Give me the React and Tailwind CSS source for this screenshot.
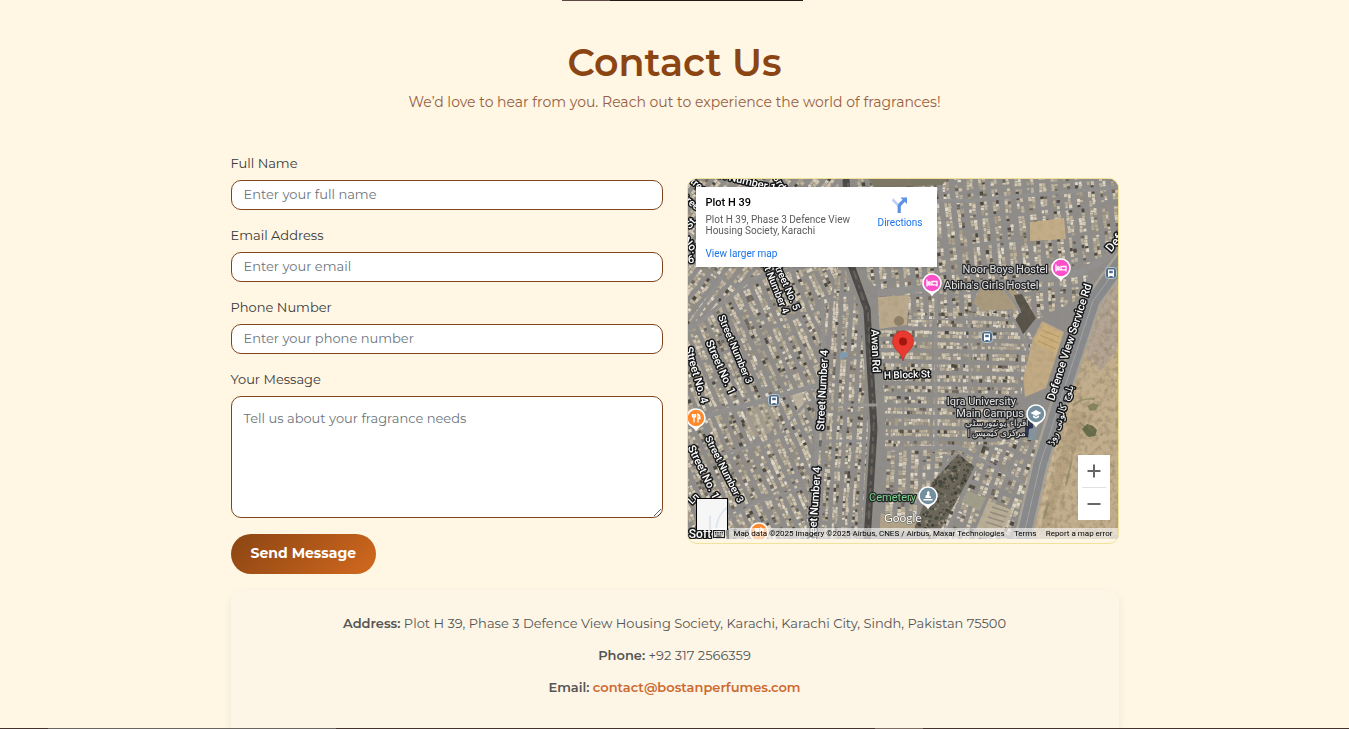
import React from "react";

/* ---------- aerial imagery ---------- */

const PALETTE = ["#d3c8b2", "#beb39c", "#aaa08b", "#e2dac9", "#6d665b", "#4c463e", "#968e7f"];
const WEIGHTS = [0.24, 0.25, 0.16, 0.12, 0.08, 0.06, 0.09];

function random(seed) {
  let s = seed;
  return () => {
    s = (s * 1664525 + 1013904223) % 4294967296;
    return s / 4294967296;
  };
}

function pick(r) {
  let sum = 0;
  for (let i = 0; i < WEIGHTS.length; i++) {
    sum += WEIGHTS[i];
    if (r < sum) return i;
  }
  return 0;
}

function houses({ seed, x, y, w, h, block, street, run, cross, rows }) {
  const rnd = random(seed);
  const paths = PALETTE.map(() => "");
  const long = rows ? w : h;
  const wide = rows ? h : w;
  for (let a = 0; a < wide; a += block + street) {
    const shift = rows ? 0 : rnd() * 4;
    for (let b = -shift; b < long; b += run + cross) {
      for (let half = 0; half < 2; half++) {
        let c = b;
        while (c < b + run) {
          const len = 1.6 + rnd() * 2.4;
          const depth = block / 2 - rnd() * 1.1;
          const off = a + (half * block) / 2 + rnd() * 0.7;
          if (rnd() > 0.1) {
            const i = pick(rnd());
            const px = (rows ? x + c : x + off).toFixed(1);
            const py = (rows ? y + off : y + c).toFixed(1);
            const pw = (rows ? len : depth).toFixed(1);
            const ph = (rows ? depth : len).toFixed(1);
            paths[i] += `M${px} ${py}h${pw}v${ph}h-${pw}z`;
          }
          c += len + rnd() * 0.6;
        }
      }
    }
  }
  return paths;
}

const QUARTERS = [
  { id: "nw", clip: "0,0 160,0 163,88 100,95 62,100 0,150", turn: "rotate(38 60 60)", seed: 7, x: -80, y: -80, w: 300, h: 300, block: 7, street: 4, run: 34, cross: 4 },
  { id: "w", clip: "60,100 100,88 150,86 134,150 128,220 122,290 118,360 0,360 0,152", turn: "rotate(-24 60 220)", seed: 21, x: -110, y: 20, w: 330, h: 410, block: 7, street: 4, run: 46, cross: 4 },
  { id: "mid", clip: "150,86 165,92 181,130 183,183 186,250 180,360 118,360 122,290 128,220 134,150", turn: "rotate(3 150 220)", seed: 33, x: 90, y: 70, w: 120, h: 300, block: 6, street: 4, run: 52, cross: 4 },
  { id: "ne", clip: "160,0 430,0 430,60 410,83 300,104 190,112 168,84", turn: "rotate(-6 300 60)", seed: 45, x: 140, y: -40, w: 320, h: 190, block: 7, street: 5, run: 23, cross: 4 },
  { id: "n2", clip: "190,118 250,108 330,104 400,96 392,120 350,140 190,140", turn: "rotate(-3 300 120)", seed: 51, x: 180, y: 90, w: 220, h: 60, block: 7, street: 5, run: 22, cross: 4 },
  { id: "mid-e", clip: "190,134 330,132 345,160 334,210 330,262 270,276 196,270", turn: "rotate(1 260 200)", seed: 64, x: 188, y: 130, w: 180, h: 144, block: 7, street: 4, run: 25, cross: 4, rows: true },
  { id: "s", clip: "192,270 270,268 240,310 226,344 190,332", turn: "rotate(2 220 300)", seed: 72, x: 186, y: 262, w: 90, h: 90, block: 8, street: 4, run: 28, cross: 4 },
  { id: "se", clip: "270,272 334,256 352,262 326,360 232,360 286,292", turn: "rotate(20 300 310)", seed: 88, x: 220, y: 230, w: 160, h: 160, block: 8, street: 4, run: 36, cross: 5 },
].map((q) => ({ ...q, paths: houses(q) }));

const SCRUB = (() => {
  const rnd = random(99);
  return Array.from({ length: 220 }, () => ({
    x: 335 + rnd() * 95,
    y: 100 + rnd() * 260,
    r: 0.5 + rnd() * 1.5,
    dark: rnd() > 0.5,
  }));
})();

const TREES = (() => {
  const rnd = random(13);
  return Array.from({ length: 420 }, () => ({
    x: 225 + rnd() * 62,
    y: 272 + rnd() * 82,
    r: 0.6 + rnd() * 1.3,
    tone: Math.floor(rnd() * 4),
  }));
})();

function Imagery() {
  return (
    <>
      <defs>
        <filter id="soft"><feGaussianBlur stdDeviation="0.35" /></filter>
        <filter id="grain" x="0" y="0" width="100%" height="100%">
          <feTurbulence type="fractalNoise" baseFrequency="0.18" numOctaves="4" seed="4" />
          <feColorMatrix values="0 0 0 0 0.28  0 0 0 0 0.22  0 0 0 0 0.14  2 0 0 0 -0.9" />
        </filter>
        {QUARTERS.map((q) => (
          <clipPath id={`q-${q.id}`} key={q.id}><polygon points={q.clip} /></clipPath>
        ))}
        <clipPath id="graves"><polygon points="270,275 287,288 253,350 226,350 244,304" /></clipPath>
        <clipPath id="desert"><polygon points="440,83 412,123 382,213 358,286 341,362 440,362" /></clipPath>
      </defs>
      <rect width="430" height="360" fill="#8f8d8b" />
      <g filter="url(#soft)">
        {QUARTERS.map((q) => (
          <g key={q.id} clipPath={`url(#q-${q.id})`}>
            <g transform={q.turn}>
              {q.paths.map((d, i) => <path key={i} d={d} fill={PALETTE[i]} />)}
            </g>
          </g>
        ))}
        <path d="M180 0h80l-6 6-66 3z" fill="#7c7765" />
        <path d="M342 43l34-4 2 21-36 2z" fill="#c3ad88" />
        <path d="M190 118l31-2-2 30-28 4z" fill="#baa98c" />
        <path d="M292 110l36 0 3 20-36 2-10-8z" fill="#a99a7e" />
        <path d="M326 116l8-1 14 24-14 18-8-14 6-10z" fill="#59534a" />
        <path d="M354 142l22 11-18 56-21 9-2-18 10-40z" fill="#c1aa84" />
        <path d="M356 146l18 9-6 20-22-12z" fill="#cbb07c" />
        <path d="M350 162l18 8M352 156l18 8M354 151l17 7" stroke="#b2986a" strokeWidth="1" />
        <path d="M58 232l20-8 10 12-6 18-22 6z" fill="#b5ac95" opacity=".5" />
        <path d="M104 216l10-5 3 22-5 4z" fill="#bdb5a3" />
        <circle cx="211" cy="142" r="5" fill="#8f7f66" />
        <path d="M152 174l8-1v5l-8 2z" fill="#7f9cb0" />
        <path d="M337 242l8 0 0 18-8-2z" fill="#25334f" />
        <path d="M341 250l8-2-1 13-8 0z" fill="#84939c" />
        <g clipPath="url(#graves)">
          <rect x="220" y="270" width="70" height="90" fill="#6b665a" />
          {TREES.map((t, i) => <circle key={i} cx={t.x} cy={t.y} r={t.r} fill={["#3f3e35", "#8f8878", "#545847", "#4a4840"][t.tone]} />)}
        </g>
        <path d="M280 312l18 7-6 12-19-8z" fill="#a09e8a" />
        <path d="M300 322l24 9-10 26-26-7z" fill="#b9ae97" />
        <path d="M304 328l16 5M302 333l16 5M300 338l16 5M298 343l16 5" stroke="#958d7e" strokeWidth="1.4" />
        <path d="M190 334l38 6-2 14-37-4z" fill="#b1a389" />
        <g clipPath="url(#desert)">
          <rect x="330" y="80" width="110" height="285" fill="#c2ae8c" />
          <path d="M432 96l-22 30-12 52 16 14 20-30z" fill="#b3a493" />
          <path d="M385 230l14 4-4 22-18 38-14 50-14 16 14-52z" fill="#ad9a78" opacity=".6" />
          {SCRUB.map((s, i) => <circle key={i} cx={s.x} cy={s.y} r={s.r} fill={s.dark ? "#9a8a68" : "#d2bf9b"} opacity=".55" />)}
          <path d="M398 140Q388 190 372 250T350 360" stroke="#cdbb9a" strokeWidth="3" fill="none" opacity=".7" />
          <path d="M386 226q6-7 20-6M392 244q10 8 16 12M384 280l-6 26M360 325l-4 14" stroke="#767a52" strokeWidth="2" fill="none" opacity=".5" strokeLinecap="round" />
          <path d="M394 250l5-5 6 2 4 4-2 6-6 1-3-2z" fill="#56603d" opacity=".85" />
          <path d="M399 227l6-3 6 2-3 5-6 1z" fill="#7a7b55" opacity=".85" />
          <rect x="330" y="80" width="110" height="285" filter="url(#grain)" opacity=".6" />
        </g>
        <g fill="none" stroke="#929190">
          <path d="M0 152L40 120 62 100 140 82M0 150q20-30 34-52" strokeWidth="4" />
          <path d="M0 248L22 236 84 219 130 206" strokeWidth="5" />
          <path d="M30 276L84 262 120 222M40 340L70 323 118 308" strokeWidth="3" />
          <path d="M134 226h54M134 262h50" strokeWidth="3" />
          <path d="M134 118L136 170 130 245 124 360" strokeWidth="4" />
          <path d="M160 0l8 88" strokeWidth="3" />
          <path d="M196 22L280 22 430 8" strokeWidth="4" />
          <path d="M190 114L250 108 320 104 392 94 420 78 440 58" strokeWidth="7" />
          <path d="M248 112v160M282 134v120M310 104q20 20 22 30M320 132q14 20 20 40" strokeWidth="3" />
          <path d="M194 270L270 268 336 304" strokeWidth="4" />
          <path d="M288 288L256 358" strokeWidth="3" />
        </g>
        <path d="M159 0L165 86 181 130 185 183 189 250 182 362" fill="none" stroke="#8f8d8a" strokeWidth="18" />
        <path d="M158 0L163 86 179 130 182 183 186 250 179 362" fill="none" stroke="#4b4946" strokeWidth="7" />
        <path d="M160 4L165 90 180 134 183 190 186 240 180 355" fill="none" stroke="#65625c" strokeWidth="2" strokeDasharray="9 6 4 3" />
        <path d="M172 226h18" stroke="#9a9895" strokeWidth="3" />
        <path d="M438 76L405 122 376 210 352 286 334 364" fill="none" stroke="#aaa498" strokeWidth="18" strokeLinejoin="round" />
        <path d="M438 76L405 122 376 210 352 286 334 364" fill="none" stroke="#888a8d" strokeWidth="13" strokeLinejoin="round" />
        <path d="M438 76L405 122 376 210 352 286 334 364" fill="none" stroke="#a5a5a2" strokeWidth="1" />
      </g>
      <rect width="430" height="360" filter="url(#grain)" opacity=".25" />
    </>
  );
}

/* ---------- labels and pins ---------- */

const STREETS = [
  ["Street Number 4", 134, 211, -87, 11],
  ["Street Number 4", 126, 328, -86, 11],
  ["Awan Rd", 188, 172, 88, 11],
  ["H Block St", 219, 195, -2, 10],
  ["Street Number 3", 48, 170, 67, 10],
  ["Street No. 1", 33, 188, 66, 11],
  ["Street No. 4", 9, 196, 74, 11],
  ["Street Number 3", 37, 290, 63, 10],
  ["Street No. 1", 16, 293, 64, 11],
  ["Street No. 5", 99, 106, 66, 10],
  ["Street Number 4", 85, 100, 68, 10],
  ["Street Number 13", 52, 0, 14, 11],
  ["3rd", 92, 3, 60, 10],
  ["Street", 10, 5, 40, 10],
  ["Street", 3, 22, 40, 10],
  ["St", 2, 44, -50, 11],
  ["No.", 3, 66, 50, 11],
  ["6", 3, 80, -10, 11],
  ["Ln", 5, 319, -45, 10],
  ["Defence View Service Rd", 381, 163, -72, 11],
  ["Def", 426, 64, -50, 12],
  ["بلوچ کالونی روڈ", 372, 236, -72, 10],
];

function Place({ x, y, color, children }) {
  return (
    <g transform={`translate(${x} ${y})`}>
      <path d="M0 13.5C-1.5 10.5-4 9-6.3 7.5A9.8 9.8 0 1 1 6.3 7.5C4 9 1.5 10.5 0 13.5Z" fill="#fff" />
      <circle r="8.2" fill={color} />
      {children}
    </g>
  );
}

function Bed() {
  return (
    <path d="M-5-3.5V3.5M-5 1.8H5M5 3.5V-1.5H0V1.5M-2.7-1.3a1 1 0 1 0 .1 0" fill="none" stroke="#fff" strokeWidth="1.3" />
  );
}

function Fork() {
  return (
    <path d="M-3.5-4v3M-2-4v3M-.5-4v3M-3.5-1h3M-2-1V4.5M2 4.5V-4q2 1 2 4.500H2" fill="none" stroke="#fff" strokeWidth="1.3" />
  );
}

function Bus({ x, y }) {
  return (
    <g transform={`translate(${x} ${y})`}>
      <rect x="-5.5" y="-5.5" width="11" height="11" rx="3" fill="#4f6b85" stroke="#b9c6d1" strokeWidth="1" />
      <path d="M-3-3.500h6v6.500h-6z" fill="#fff" />
      <path d="M-1.800-2.200h3.600v2.400h-3.600z" fill="#4f6b85" />
      <path d="M-2.200 3v1.200M2.200 3v1.200" stroke="#fff" strokeWidth="1.200" />
    </g>
  );
}

function Aerial() {
  return (
    <svg viewBox="0 0 430 360" preserveAspectRatio="xMidYMid slice" className="block h-full w-full font-['Roboto','Noto_Sans',sans-serif]" role="img" aria-label="Satellite map of Defence View, Karachi">
      <Imagery />
      <g fill="#fff" stroke="#17181a" strokeWidth="3" strokeLinejoin="round" paintOrder="stroke" fontWeight="500" textAnchor="middle">
        {STREETS.map(([name, x, y, turn, size], i) => (
          <text key={i} fontSize={size} dy="4" transform={`translate(${x} ${y}) rotate(${turn})`}>{name}</text>
        ))}
        <text x="12" y="359" fontSize="12">Soft</text>
      </g>
      <g fill="#e3e3e3" stroke="#25272a" strokeWidth="2.500" strokeLinejoin="round" paintOrder="stroke" fontSize="11">
        <text x="360" y="94" textAnchor="end">Noor Boys Hostel</text>
        <text x="256" y="110">Abiha's Girls Hostel</text>
        <text x="328" y="226" textAnchor="end">Iqra University</text>
        <text x="336" y="238" textAnchor="end">Main Campus</text>
        <text x="309" y="247" fontSize="9" textAnchor="middle">اقراء یونیورسٹی</text>
        <text x="309" y="257" fontSize="9" textAnchor="middle">| مرکزی کیمپس</text>
        <text x="228" y="322" textAnchor="end" fill="#7cd68c">Cemetery</text>
      </g>
      <Bus x={299} y={158} />
      <Bus x={86} y={221} />
      <Bus x={423} y={94} />
      <Place x={373} y={89} color="#fa4fc8"><Bed /></Place>
      <Place x={244} y={104} color="#fa4fc8"><Bed /></Place>
      <Place x={8} y={239} color="#ff8a2e"><Fork /></Place>
      <Place x={71} y={353} color="#ff8a2e"><Fork /></Place>
      <Place x={348} y={235} color="#738e9c">
        <path d="M-5.5-1L0-4 5.500-1 0 2ZM-3 1.200V3.200L0 4.800 3 3.200V1.200L0 3Z" fill="#fff" />
      </Place>
      <Place x={240} y={317} color="#738e9c">
        <path d="M-4.5 4.500V3H4.500V4.500ZM-2.500 2V-.5L-1-1V-4L.5-5 1.500-4V0L3 .5V2Z" fill="#fff" />
      </Place>
      <path d="M215 182C214 173 204.500 171 204.500 162.300A10.500 10.500 0 1 1 225.500 162.300C225.500 171 216 173 215 182Z" fill="#ea3a30" stroke="#c5221f" strokeWidth=".6" />
      <circle cx="215" cy="162.500" r="4" fill="#a3150f" />
      <text x="196" y="343" fontSize="12" fontFamily="Lato, sans-serif" fill="#fff" stroke="#5c5b58" strokeWidth="1" paintOrder="stroke">Google</text>
    </svg>
  );
}

function MapPanel() {
  return (
    <div className="mb-[6px] overflow-hidden rounded-[10px] border border-[#f0e399] pb-1">
      <div className="relative h-[360px] overflow-hidden font-['Roboto',sans-serif]">
        <Aerial />
        <div className="absolute top-2 left-2 flex h-20 w-[241px] justify-between bg-white pt-2 pr-[14px] pl-[10px] shadow-sm">
          <div className="flex flex-col">
            <p className="text-[11px] leading-[15px] font-medium text-black">Plot H 39</p>
            <p className="mt-1 w-[150px] text-[10px] leading-[11px] text-[#5b5b5b]">Plot H 39, Phase 3 Defence View Housing Society, Karachi</p>
            <a href="#map" className="mt-3 text-[10px] leading-[12px] text-[#1a73e8]">View larger map</a>
          </div>
          <a href="#directions" className="flex flex-col items-center gap-1 pt-[2px] text-[10px] leading-[12px] text-[#1a73e8]">
            <svg viewBox="0 0 16 16" className="h-4 w-4" aria-hidden="true">
              <path d="M1 1L7 7.500V11L0 3.800Z" fill="#b9cff5" />
              <path d="M15 .5V7L12.800 4.800 9.300 8.500Q8.800 9.300 8.800 10.500V16H5.600V10Q5.600 7.500 7 6L10.600 2.700 8.500.500Z" fill="#5b92e5" />
            </svg>
            Directions
          </a>
        </div>
        <div className="absolute right-2 bottom-[19px] flex w-8 flex-col items-center bg-white text-[#666]">
          <button type="button" aria-label="Zoom in" className="flex h-8 w-full items-center justify-center">
            <svg viewBox="0 0 14 14" className="h-[14px] w-[14px]"><path d="M7 .5v13M.5 7h13" stroke="currentColor" strokeWidth="2" /></svg>
          </button>
          <span className="h-px w-6 bg-[#e1e1e1]" />
          <button type="button" aria-label="Zoom out" className="flex h-8 w-full items-center justify-center">
            <svg viewBox="0 0 14 14" className="h-[14px] w-[14px]"><path d="M.5 7h13" stroke="currentColor" strokeWidth="2" /></svg>
          </button>
        </div>
        <button type="button" aria-label="Show street map" className="absolute bottom-[9px] left-2 h-8 w-8 border border-b-0 border-black bg-[#f6f6f6]">
          <svg viewBox="0 0 30 30" className="h-full w-full">
            <path d="M13 30V16M19 30Q20 16 30 8" fill="none" stroke="#dfe6ee" strokeWidth="2" />
          </svg>
        </button>
        <div className="absolute right-0 bottom-0 left-6 flex h-[11px] items-center justify-end text-[8px] leading-[11px] text-black">
          <span className="flex h-full w-[14px] items-center justify-center bg-white/60">
            <svg viewBox="0 0 12 8" className="h-2 w-3" aria-hidden="true">
              <rect x=".5" y=".5" width="11" height="7" fill="none" stroke="#222" />
              <path d="M2 2.500h8M2 4h8" stroke="#222" strokeDasharray="1 .7" />
              <path d="M3.500 6h5" stroke="#222" />
            </svg>
          </span>
          <span className="ml-[3px] flex h-full flex-1 items-center justify-between bg-white/60 px-[5px] whitespace-nowrap">
            <span>Map data ©2025 Imagery ©2025 Airbus, CNES / Airbus, Maxar Technologies</span>
            <a href="#terms">Terms</a>
            <a href="#report">Report a map error</a>
          </span>
        </div>
      </div>
    </div>
  );
}

/* ---------- page ---------- */

const control =
  "block w-full rounded-[10px] border border-[#7f4420] bg-white px-3 text-[13px] leading-[18px] text-[#333] placeholder:text-[#6c757d] outline-none";

function Field({ id, label, type, placeholder }) {
  return (
    <div className="mb-4">
      <label htmlFor={id} className="mb-2 block text-[13px] leading-[18px] text-[#3a3a3a]">{label}</label>
      <input id={id} type={type} placeholder={placeholder} className={`${control} h-[30px] pb-[2px]`} />
    </div>
  );
}

export default function App() {
  return (
    <div className="flex h-screen flex-col overflow-hidden bg-[#fff6e4] font-['Montserrat','Inter',sans-serif]">
      <div className="mx-auto flex h-px w-[241px] shrink-0 translate-x-2">
        <span className="w-12 bg-[#5d4a42]" />
        <span className="flex-1 bg-[#241a15]" />
      </div>
      <main className="mx-auto flex min-h-0 w-full max-w-[888px] flex-1 flex-col">
        <header className="pt-9 text-center">
          <h1 className="text-[38px] leading-[52px] font-semibold text-[#8b4513]">Contact Us</h1>
          <p className="mt-1 text-[14px] leading-[18px] text-[#965f42]">We’d love to hear from you. Reach out to experience the world of fragrances!</p>
        </header>
        <div className="mt-[43px] grid grid-cols-2 items-center gap-6">
          <form onSubmit={(e) => e.preventDefault()}>
            <Field id="name" label="Full Name" type="text" placeholder="Enter your full name" />
            <Field id="email" label="Email Address" type="email" placeholder="Enter your email" />
            <Field id="phone" label="Phone Number" type="tel" placeholder="Enter your phone number" />
            <div className="mb-4">
              <label htmlFor="message" className="mb-2 block text-[13px] leading-[18px] text-[#3a3a3a]">Your Message</label>
              <textarea id="message" placeholder="Tell us about your fragrance needs" className={`${control} h-[122px] resize-y py-3`} />
            </div>
            <button type="submit" className="block h-10 rounded-full bg-linear-135 from-[#8b4513] to-[#d2691e] px-5 pb-[2px] text-[14px] leading-[20px] font-bold text-white">Send Message</button>
          </form>
          <MapPanel />
        </div>
        <section className="mt-4 flex flex-1 flex-col gap-3 rounded-t-[12px] bg-[#fdf5e6] pt-[23px] text-center text-[13px] leading-[20px] text-[#555] shadow-[0_4px_10px_rgba(0,0,0,0.07)]">
          <p><strong className="font-semibold">Address:</strong> Plot H 39, Phase 3 Defence View Housing Society, Karachi, Karachi City, Sindh, Pakistan 75500</p>
          <p><strong className="font-semibold">Phone:</strong> +92 317 2566359</p>
          <p><strong className="font-semibold">Email:</strong> <a href="mailto:contact@bostanperfumes.com" className="font-semibold text-[#cb6a30]">contact@bostanperfumes.com</a></p>
        </section>
      </main>
      <div className="relative z-10 flex h-px shrink-0 bg-[#44332d]">
        <span className="ml-12 w-72 bg-[#6b6560]" />
        <span className="flex-1" />
        <span className="mr-[426px] w-12 bg-[#7d6c62]" />
      </div>
    </div>
  );
}
